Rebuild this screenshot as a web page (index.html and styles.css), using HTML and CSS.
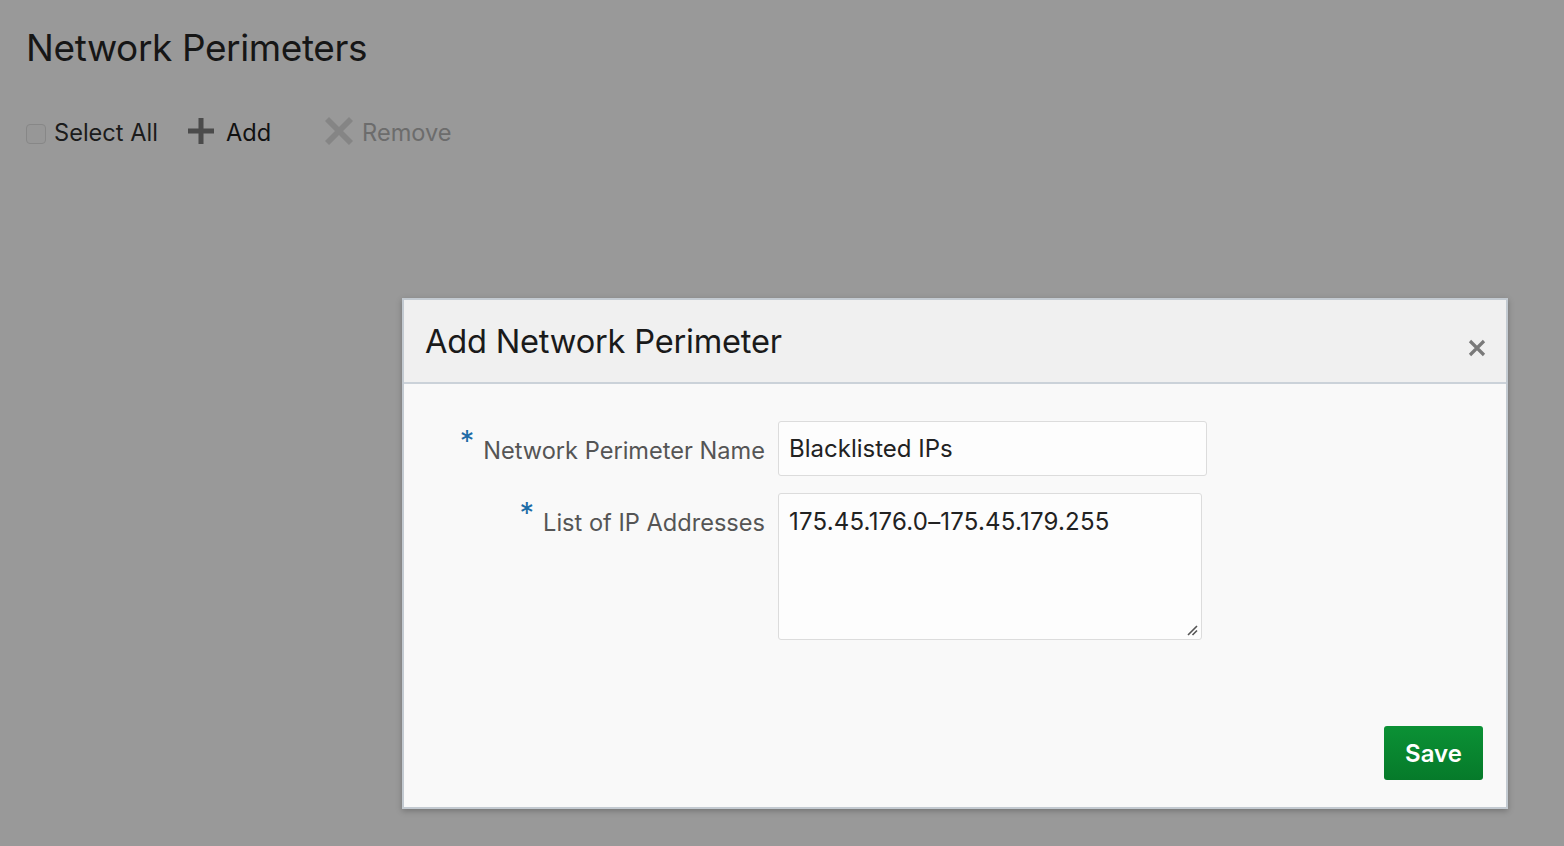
FILE: index.html
```html
<!DOCTYPE html>
<html lang="en">
<head>
<meta charset="utf-8">
<title>Network Perimeters</title>
<link rel="stylesheet" href="styles.css">
</head>
<body>
<div class="page">
  <h1 class="page-title">Network Perimeters</h1>
  <div class="toolbar">
    <label class="select-all"><span class="checkbox"></span><span>Select All</span></label>
    <button class="tool add" type="button">
      <svg class="icon" viewBox="0 0 26 26" width="26" height="26"><path d="M10.5 0h5v10.5H26v5H15.5V26h-5V15.5H0v-5h10.5z" fill="#4b4b4b"/></svg>
      <span>Add</span>
    </button>
    <button class="tool remove" type="button">
      <svg class="icon" viewBox="0 0 28 28" width="28" height="28"><path d="M0 4 4 0 14 10 24 0 28 4 18 14 28 24 24 28 14 18 4 28 0 24 10 14z" fill="#858585"/></svg>
      <span>Remove</span>
    </button>
  </div>
</div>

<div class="dialog">
  <div class="dialog-header">
    <h2 class="dialog-title">Add Network Perimeter</h2>
    <svg class="close" viewBox="0 0 18 18" width="18" height="18"><path d="M2 2 16 16M16 2 2 16" stroke="#7a7a7a" stroke-width="3.2"/></svg>
  </div>
  <div class="dialog-body">
    <div class="form">
      <div class="row">
        <label class="label"><span class="req">*</span>Network Perimeter Name</label>
        <div class="field name">Blacklisted IPs</div>
      </div>
      <div class="row">
        <label class="label"><span class="req">*</span>List of IP Addresses</label>
        <div class="field area"><span class="ip">175.45.176.0–175.45.179.255</span>
          <svg class="grip" viewBox="0 0 12 12" width="12" height="12"><path d="M2 11 11 2M6.5 11 11 6.5" stroke="#555" stroke-width="1.6"/></svg>
        </div>
      </div>
    </div>
    <div class="actions">
      <button class="save" type="button">Save</button>
    </div>
  </div>
</div>
</body>
</html>
```

FILE: styles.css
```css
* { box-sizing: border-box; }
html, body { margin: 0; padding: 0; }
body {
  background: #999999;
  font-family: Inter, "Noto Sans", sans-serif;
  width: 1564px;
  height: 846px;
  overflow: hidden;
  position: relative;
}
.page { padding: 24px 0 0 26px; }
.page-title {
  margin: 0;
  font-weight: 400;
  font-size: 37px;
  line-height: 48px;
  color: #161616;
  letter-spacing: -0.4px;
}
.toolbar {
  display: flex;
  align-items: center;
  margin-top: 44px;
  height: 32px;
}
.select-all {
  display: flex;
  align-items: center;
  font-size: 23.6px;
  color: #1b1b1b;
  gap: 8px;
}
.checkbox {
  width: 20px;
  height: 20px;
  border: 1px solid #878787;
  border-radius: 4px;
  background: #979797;
  margin-top: 4px;
}
.tool {
  display: flex;
  align-items: center;
  background: none;
  border: 0;
  padding: 0;
  font: inherit;
  font-size: 23.6px;
  gap: 12px;
}
.add { margin-left: 30px; color: #111; }
.add .icon { margin-bottom: 3px; }
.remove { margin-left: 54px; color: #6c6c6c; gap: 9px; }
.remove .icon { margin-bottom: 3px; }

.dialog {
  position: absolute;
  left: 402px;
  top: 298px;
  width: 1106px;
  height: 511px;
  border: 2px solid #c3cad1;
  background: #f9f9f9;
  display: flex;
  flex-direction: column;
  box-shadow: 0 2px 6px rgba(0,0,0,0.25);
}
.dialog-header {
  height: 84px;
  background: #f0f0f0;
  border-bottom: 2px solid #cbd2d9;
  display: flex;
  align-items: center;
  justify-content: space-between;
  padding: 0 20px 0 21px;
}
.dialog-title {
  margin: 0;
  font-weight: 400;
  font-size: 32.6px;
  color: #1a1a1a;
  letter-spacing: -0.2px;
}
.close { margin-top: 14px; }
.dialog-body {
  flex: 1;
  display: flex;
  flex-direction: column;
  justify-content: space-between;
  padding: 37px 23px 27px 0;
}
.form { display: flex; flex-direction: column; gap: 17px; }
.row { display: flex; align-items: flex-start; }
.label {
  width: 374px;
  text-align: right;
  font-size: 23.6px;
  line-height: 28px;
  color: #555;
  padding-top: 16px;
  padding-right: 13px;
}
.req {
  color: #1e6ca6;
  font-size: 29px;
  line-height: 0;
  position: relative;
  top: -8px;
  margin-right: 9px;
}
.field {
  background: #fdfdfd;
  border: 1px solid #dcdcdc;
  border-radius: 3px;
  font-size: 24px;
  color: #222;
  padding: 12px 10px;
}
.field.name { width: 429px; height: 55px; }
.field.area { width: 424px; height: 147px; position: relative; padding-top: 13px; }
.ip { letter-spacing: 0.2px; }
.grip { position: absolute; right: 3px; bottom: 3px; }
.actions { display: flex; justify-content: flex-end; }
.save {
  width: 99px;
  height: 54px;
  border: 0;
  border-radius: 3px;
  background: linear-gradient(#0b9135, #067a2a);
  color: #fff;
  font: inherit;
  font-size: 24px;
  font-weight: 600;
}
```
